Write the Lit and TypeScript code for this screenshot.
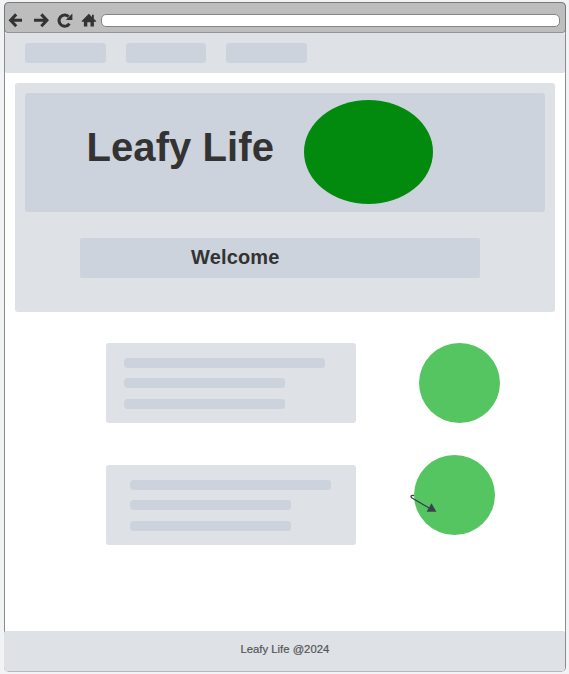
import { LitElement, html, css } from "lit";
import { customElement } from "lit/decorators.js";

@customElement("text-card")
class TextCard extends LitElement {
  static styles = css`
    :host { display: block; box-sizing: border-box; width: 250px; height: 80px; background: #dee1e6; border-radius: 3px; padding: 15px 0 0 18px; }
    :host([inset]) { padding-left: 24px; }
    .lines { display: flex; flex-direction: column; gap: 10.4px; }
    .line { width: 161px; height: 10px; background: #ccd3dc; border-radius: 4px 3px 3px 4px; }
    .long { width: 201px; }
  `;
  render() {
    return html`<div class="lines"><div class="line long"></div><div class="line"></div><div class="line"></div></div>`;
  }
}

@customElement("app-root")
class AppRoot extends LitElement {
  static styles = css`
    :host { display: block; box-sizing: border-box; width: 569px; height: 674px; padding: 2px 3px 2px 4px; background: #f2f3f5; font-family: "Liberation Sans", Arial, sans-serif; color: #333; overflow: hidden; }
    * { box-sizing: border-box; }
    .window { display: flex; flex-direction: column; width: 562px; height: 670px; background: #fff; border: 1px solid #8a8b8d; border-top: 0; border-bottom: 1px solid #b4b7bb; border-radius: 5px; }
    .toolbar { flex: none; display: flex; align-items: center; height: 31px; margin: 0 -1px; padding: 5px 5px 0 3px; background: #bdbdbd; border: 1px solid #77797b; border-bottom-color: #929496; border-radius: 5px 5px 4px 4px; }
    .icons { flex: none; width: 93px; height: 20px; }
    .address { flex: 1; height: 13px; background: #fff; border: 1px solid #858585; border-radius: 5px; }
    .nav { flex: none; display: flex; gap: 20px; height: 40px; padding: 10px 20px; background: #dee1e6; border-radius: 2px; }
    .tab { width: 81px; height: 20px; background: #ccd3dc; border-radius: 3px; }
    .tab:nth-child(2) { width: 80px; }
    .hero { flex: none; height: 229px; margin: 10px 10px 0; padding: 10px; background: #dee1e6; border-radius: 3px; }
    .banner { display: flex; height: 119px; padding: 7px 0 0 61.5px; background: #ccd3dc; border-radius: 3px; }
    h1 { margin: 24px 0 0; width: 217.5px; font-size: 40px; line-height: 46px; font-weight: bold; letter-spacing: 0.08px; white-space: nowrap; }
    .leaf { width: 129px; height: 104px; border-radius: 50%; background: #028a0f; }
    .welcome { width: 400px; height: 40px; margin: 26px 0 0 55px; padding-left: 111px; background: #ccd3dc; border-radius: 2px; font-size: 20px; line-height: 39px; font-weight: bold; letter-spacing: 0.15px; }
    .content { flex: 1; padding: 31px 0 0 101px; }
    .row { display: flex; height: 80px; gap: 62.5px; }
    .second { margin-top: 42px; gap: 58px; }
    .dot { position: relative; width: 81px; height: 80px; border-radius: 50%; background: #55c562; }
    .second .dot { margin-top: -9.7px; }
    .arrow { position: absolute; left: -6px; top: 36px; width: 32px; height: 24px; }
    footer { flex: none; height: 40px; margin: 0 0 0 -1px; padding-left: 236.5px; background: #dee1e6; border-radius: 2px 2px 4px 4px; color: #555; font-size: 11.3px; line-height: 37px; -webkit-text-stroke: 0.2px #555; }
  `;
  render() {
    return html`
      <div class="window">
        <div class="toolbar">
          <svg class="icons" viewBox="8 10 93 20" fill="none" stroke="#333" stroke-width="3">
            <path d="M22 20.3H11M16.2 14.4l-5.6 5.9 5.6 5.9M34 20.3h12.5M41.3 14.4l5.6 5.9-5.6 5.9"/>
            <path d="M68.6 16.6A5.6 5.6 0 1 0 69.4 23.6"/>
            <path d="M72.4 13.5v6.4h-6.6z" fill="#333" stroke="none"/>
            <path d="M81.7 21l7.1-7.2 3.2 3.2v-2.3h1.8v4.1l2.3 2.2v.8h-2.2v4.8h-3.4v-4.3h-3.2v4.3h-3.4v-4.8h-2.2z" fill="#333" stroke="none"/>
          </svg>
          <div class="address"></div>
        </div>
        <div class="nav"><div class="tab"></div><div class="tab"></div><div class="tab"></div></div>
        <div class="hero">
          <div class="banner"><h1>Leafy Life</h1><div class="leaf"></div></div>
          <div class="welcome">Welcome</div>
        </div>
        <div class="content">
          <div class="row"><text-card></text-card><div class="dot"></div></div>
          <div class="row second"><text-card inset></text-card>
            <div class="dot">
              <svg class="arrow" viewBox="408 491 32 24">
                <path d="M414 495.5C411 495 410 496.5 412 498L430 508.5" fill="none" stroke="#3a414a" stroke-width="1.4"/>
                <path d="M431.5 503.3L436.4 511.8H426.6z" fill="#3a414a"/>
              </svg>
            </div>
          </div>
        </div>
        <footer>Leafy Life @2024</footer>
      </div>`;
  }
}
